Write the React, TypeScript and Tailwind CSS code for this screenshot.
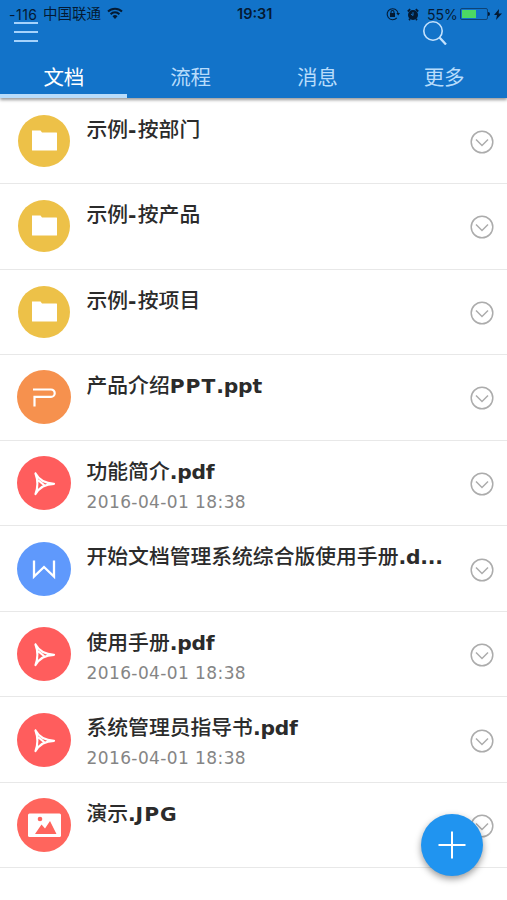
type FileKind = "folder" | "ppt" | "pdf" | "doc" | "image";

interface FileItem {
  name: string;
  kind: FileKind;
  date?: string;
}

const files: FileItem[] = [
  { name: "示例-按部门", kind: "folder" },
  { name: "示例-按产品", kind: "folder" },
  { name: "示例-按项目", kind: "folder" },
  { name: "产品介绍PPT.ppt", kind: "ppt" },
  { name: "功能简介.pdf", kind: "pdf", date: "2016-04-01 18:38" },
  { name: "开始文档管理系统综合版使用手册.d...", kind: "doc" },
  { name: "使用手册.pdf", kind: "pdf", date: "2016-04-01 18:38" },
  { name: "系统管理员指导书.pdf", kind: "pdf", date: "2016-04-01 18:38" },
  { name: "演示.JPG", kind: "image" },
];

const tabs = ["文档", "流程", "消息", "更多"];

const kindColor: Record<FileKind, string> = {
  folder: "bg-[#edc148] size-[52px] ml-px",
  ppt: "bg-[#f6914e] size-[54px]",
  pdf: "bg-[#ff5d5d] size-[54px]",
  doc: "bg-[#5f99fc] size-[54px]",
  image: "bg-[#ff655d] size-[54px]",
};

function KindIcon({ kind }: { kind: FileKind }) {
  return (
    <div className={`rounded-full shrink-0 flex items-center justify-center ${kindColor[kind]}`}>
      <svg width="54" height="54" viewBox="0 0 54 54" fill="none" stroke="white" className="shrink-0">
        {kind === "folder" && (
          <path d="M15 16.500h8.500l1.500 2H39.500a.5.5 0 0 1 .5.5v17a.5.5 0 0 1-.5.5H15.500a.5.5 0 0 1-.5-.5z" fill="white" stroke="none" />
        )}
        {kind === "ppt" && (
          <path d="M16 19.500H34a3.700 3.700 0 0 1 0 7.400H17.500V36.500" strokeWidth="2.200" />
        )}
        {kind === "pdf" && (
          <path d="M18.500 17.500C22 24 29 27.300 37 27.800 29.500 28 22.500 31 18.500 38M18.500 17.500C21 24 21 31 18.500 38M21.500 24.500L27 29" strokeWidth="2.200" strokeLinejoin="round" strokeLinecap="round" />
        )}
        {kind === "doc" && (
          <path d="M17 18.500v16l10-9.500 10 9.500v-16" strokeWidth="2.300" />
        )}
        {kind === "image" && (
          <>
            <rect x="11" y="15.500" width="33" height="23.500" rx="1.500" fill="white" stroke="none" />
            <path d="M18 36l6.500-9.500 3.500 4 5-7.500L39.500 36z" fill="#ff655d" stroke="none" />
            <circle cx="23" cy="21" r="2.300" fill="#ff655d" stroke="none" />
          </>
        )}
      </svg>
    </div>
  );
}

function runTracking(run: string) {
  if (run === "-") return "tracking-[1.300px]";
  if (/[A-Z]/.test(run)) return "tracking-[1px]";
  return "tracking-[-0.200px]";
}

// Chinese runs are set lighter than the latin ones
function FileName({ name }: { name: string }) {
  const runs = name.match(/[\u4e00-\u9fff]+|[A-Z]+|[^\u4e00-\u9fffA-Z]+/g) ?? [];
  return (
    <p className="text-[20.800px] leading-[28px] text-[#2b2b2b] whitespace-nowrap">
      {runs.map((run, i) =>
        /[\u4e00-\u9fff]/.test(run) ? (
          <span key={i} className="font-['Noto_Sans_CJK_SC',sans-serif] font-medium">{run}</span>
        ) : (
          <span key={i} className={`font-['DejaVu_Sans',sans-serif] font-bold text-[20.300px] ${runTracking(run)}`}>{run}</span>
        )
      )}
    </p>
  );
}

function StatusBar() {
  return (
    <div className="h-[28px] px-[9px] flex items-center justify-between text-[#041a33] relative">
      <div className="flex items-center text-[14px] font-['Inter','Noto_Sans_CJK_SC',sans-serif]">
        <span className="w-[34px] tracking-[0.500px]">-116</span>
        <span className="text-[14.500px]">中国联通</span>
        <svg width="16" height="12" viewBox="0 0 16 12" fill="none" stroke="currentColor" strokeWidth="2" className="ml-[6px] -mt-[2px]">
          <path d="M1 4.500a10 10 0 0 1 14 0M3.600 7.200a6.200 6.200 0 0 1 8.800 0" />
          <path d="M8 12L5.500 9.300a3.600 3.600 0 0 1 5 0z" fill="currentColor" stroke="none" />
        </svg>
      </div>
      <span className="absolute left-[237px] text-[14.500px] font-semibold font-['Inter',sans-serif]">19:31</span>
      <div className="flex items-center text-[14px] font-['Inter',sans-serif] -mr-[4px]">
        {/* rotation lock */}
        <svg width="14" height="14" viewBox="0 0 14 14" fill="none" stroke="currentColor" strokeWidth="1.100">
          <path d="M10.800 10.800A5.500 5.500 0 1 1 12 6" />
          <path d="M10.300 6h3.700l-1.800 2.500z" fill="currentColor" stroke="none" />
          <rect x="4" y="6" width="5" height="4" fill="currentColor" stroke="none" />
          <path d="M5 6V5a1.500 1.500 0 0 1 3 0v1" />
        </svg>
        {/* alarm */}
        <svg width="12" height="13" viewBox="0 0 12 13" fill="none" className="ml-[7px]">
          <circle cx="6" cy="7" r="5" fill="currentColor" />
          <path d="M.8 3.500L3.200 1.200M11.200 3.500L8.800 1.200M2 12l1-1M10 12l-1-1" stroke="currentColor" strokeWidth="1.800" />
          <path d="M6 4.200V7.500L4 6" stroke="#1273c9" strokeWidth="1" />
        </svg>
        <span className="ml-[8px] w-[33px]">55%</span>
        <div className="w-[28px] h-[12px] border border-[#0e4376] rounded-[2px] p-px">
          <div className="w-[14px] h-full bg-[#4cd964]" />
        </div>
        <div className="w-[2px] h-[4px] rounded-r bg-[#041a33]" />
        <svg width="8" height="11" viewBox="0 0 8 11" fill="currentColor" className="ml-[4px]">
          <path d="M5 0L0 6h3L2 11l6-6.500H4.700z" />
        </svg>
      </div>
    </div>
  );
}

export default function App() {
  return (
    <div className="w-full h-[900px] bg-white overflow-hidden relative flex flex-col">
      <header className="h-[97.500px] bg-[#1273c9] shrink-0 shadow-[0_2px_3px_rgba(0,0,0,0.4)] flex flex-col z-10">
        <StatusBar />
        <div className="h-[28px] flex justify-between items-start pl-[14px] pr-[60px] -mt-[6px]">
          <div className="w-6 h-5 flex flex-col justify-between">
            <div className="h-[2px] bg-[#a5d3fc]" />
            <div className="h-[2px] bg-[#a5d3fc]" />
            <div className="h-[2px] bg-[#a5d3fc]" />
          </div>
          <svg width="25" height="25" viewBox="0 0 25 25" fill="none" stroke="#c4e2fd" className="-mt-[2px]">
            <circle cx="11" cy="11" r="9.200" strokeWidth="1.600" />
            <path d="M17.500 17.500L24 24.500" strokeWidth="2.300" />
          </svg>
        </div>
        <nav className="flex-1 grid grid-cols-4">
          {tabs.map((tab, i) => (
            <div
              key={tab}
              className={`text-center pt-[11px] pl-px text-[20.500px] leading-[30px] font-['Noto_Sans_CJK_SC',sans-serif] border-b-4 ${
                i === 0 ? "text-white border-[#b8dcfb]" : "text-[#b8dcfb] border-transparent"
              }`}
            >
              {tab}
            </div>
          ))}
        </nav>
      </header>

      <ul className="flex flex-col pt-px">
        {files.map((file) => (
          <li key={file.name} className="h-[85.550px] border-b-[1.500px] border-[#e8e8e8] flex pl-[16.500px] pr-[13px]">
            <div className="w-[70px] flex items-center">
              <KindIcon kind={file.kind} />
            </div>
            <div className="flex-1 pt-[15px]">
              <FileName name={file.name} />
              {file.date && (
                <p className="mt-[6px] text-[17px] leading-[20px] tracking-[0.400px] text-[#858585] font-['DejaVu_Sans',sans-serif]">
                  {file.date}
                </p>
              )}
            </div>
            <svg width="24" height="24" viewBox="0 0 24 24" fill="none" stroke="#acacac" strokeWidth="1.500" className="self-center mt-[2px] shrink-0">
              <circle cx="12" cy="12" r="10.800" />
              <path d="M6 9.500l6 6 6-6" />
            </svg>
          </li>
        ))}
      </ul>

      <button className="absolute left-[421px] top-[814px] size-[62px] rounded-full bg-[#2094f0] shadow-[0_3px_7px_rgba(0,0,0,0.4)] flex items-center justify-center">
        <svg width="28" height="28" viewBox="0 0 28 28" stroke="white" strokeWidth="2">
          <path d="M14 .5v27M.5 14h27" />
        </svg>
      </button>
    </div>
  );
}
